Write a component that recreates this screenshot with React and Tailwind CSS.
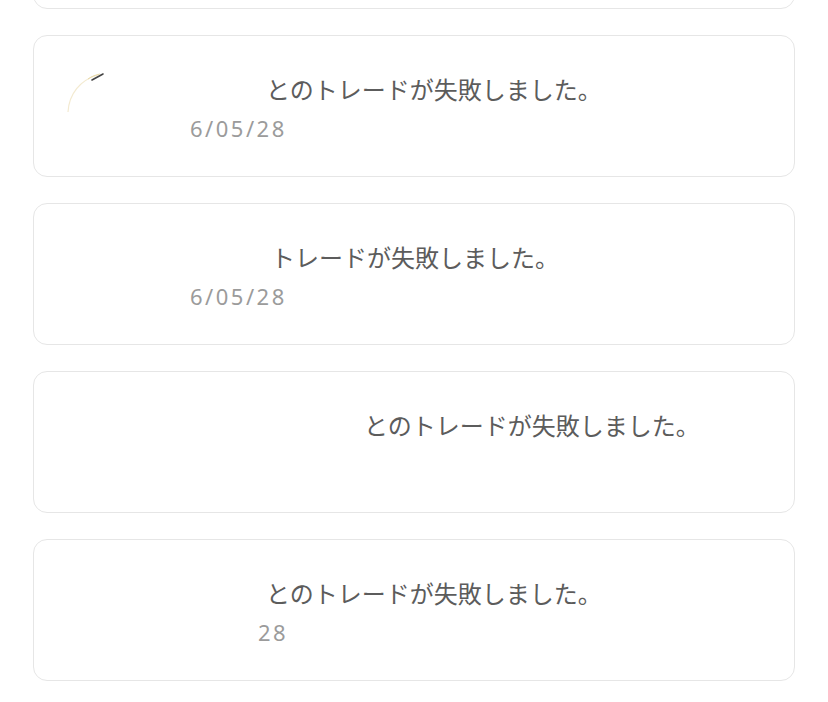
import React from "react";

const trades = [
  { name: "ユーザー", hidden: "w-[101px]", rest: "とのトレードが失敗しました。", datePad: "pl-[25px]", date: "6/05/28", avatar: true },
  { name: "ゆうとの", hidden: "w-[106px]", rest: "トレードが失敗しました。", datePad: "pl-[25px]", date: "6/05/28", avatar: false },
  { name: "ユーザーネーム", hidden: "w-[199px]", rest: "とのトレードが失敗しました。", datePad: "pl-0", date: "", avatar: false },
  { name: "ユーザー", hidden: "w-[101px]", rest: "とのトレードが失敗しました。", datePad: "pl-[93px]", date: "28", avatar: false },
];

const AvatarTrace = () => (
  <svg width="80" height="80" viewBox="0 0 80 80" className="block">
    <path d="M2 46 C3 28 14 14 32 9" fill="none" stroke="#f3ead0" strokeWidth="1.2" />
    <path d="M26 14 L37 8" fill="none" stroke="#444" strokeWidth="1.6" strokeLinecap="round" />
    <path d="M22 13 C26 10 30 9 34 8" fill="none" stroke="#e8d9a8" strokeWidth="1" />
  </svg>
);

const TradeCard = ({ item }) => {
  return (
    <div className="flex h-[142px] items-center rounded-[14px] border border-[#e6e6e6] bg-white px-[32px]">
      <div className="h-[80px] w-[80px] shrink-0">{item.avatar && <AvatarTrace />}</div>
      <div className="ml-[19px] mt-[8px] flex flex-col">
        <p className="whitespace-nowrap text-[24px] leading-[36px] text-[#5c5c5c] [font-family:'Noto_Sans_CJK_JP','Noto_Sans',sans-serif]">
          <span className={`${item.hidden} inline-block align-top text-white`}>{item.name}</span>
          {item.rest}
        </p>
        <p className={`${item.datePad} h-[42px] whitespace-nowrap text-[22px] leading-[42px] tracking-[2.5px] text-[#9b9b9b] [font-family:'Noto_Sans',sans-serif]`}>
          {item.date}
        </p>
      </div>
    </div>
  );
};

export default function App() {
  return (
    <div className="h-[702px] overflow-hidden bg-white">
      <div className="-mt-[133px] flex flex-col gap-[26px] px-[33px]">
        <div className="h-[142px] rounded-[14px] border border-[#e6e6e6] bg-white" />
        {trades.map((item, i) => (
          <TradeCard key={i} item={item} />
        ))}
      </div>
    </div>
  );
}
